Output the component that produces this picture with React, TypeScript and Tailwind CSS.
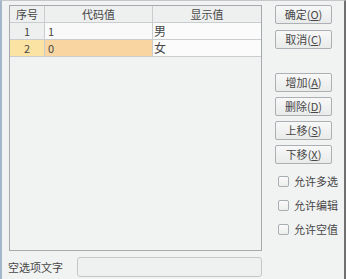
import React from "react";

const font = { fontFamily: '"Noto Sans CJK SC", "Noto Sans", sans-serif' };

function Btn({ label, k }: { label: string; k: string }) {
  return (
    <button className="w-[57px] h-[19px] rounded-[2px] border border-[#acb0b4] bg-gradient-to-b from-[#f8f8f8] to-[#e9eaea] text-[11px] leading-none text-[#474747] flex items-center justify-center">
      {label}(<span className="underline underline-offset-1">{k}</span>)
    </button>
  );
}

function Check({ label }: { label: string }) {
  return (
    <div className="flex items-center gap-[5px] h-[12px]">
      <span className="w-[11px] h-[11px] rounded-[2px] border border-[#a9aeb3] bg-gradient-to-b from-[#fbfbfb] to-[#eceded]" />
      <span className="text-[11px] leading-none text-[#474747]">{label}</span>
    </div>
  );
}

export default function App() {
  const rows = [
    { no: "1", code: "1", text: "男", active: false },
    { no: "2", code: "0", text: "女", active: true },
  ];

  return (
    <div
      style={font}
      className="w-[346px] h-[279px] bg-[#f1f2f2] border-l-2 border-l-[#a3b6ca] border-r-2 border-r-[#707070] border-t border-t-[#c4c8cb] flex text-[#474747] overflow-hidden"
    >
      {/* left */}
      <div className="pl-[7px] pt-[4px] w-[262px] flex flex-col">
        <div className="w-[253px] h-[246px] border border-[#a6aaae] bg-[#f1f2f2] flex flex-col">
          <div className="flex h-[17px] bg-[#eef0f0] border-b border-[#c9cdd0] text-[11px] leading-none">
            <div className="w-[35px] border-r border-[#c9cdd0] flex items-center justify-center">序号</div>
            <div className="w-[108px] border-r border-[#c9cdd0] flex items-center justify-center">代码值</div>
            <div className="flex-1 flex items-center justify-center">显示值</div>
          </div>
          {rows.map((r) => (
            <div key={r.no} className="flex h-[17px] border-b border-[#c9cdd0] text-[11px] leading-none">
              <div
                className={
                  "w-[35px] border-r border-[#c9cdd0] flex items-center justify-center " +
                  (r.active ? "bg-[#fbe3a3]" : "bg-[#eef0f0]")
                }
              >
                {r.no}
              </div>
              <div
                className={
                  "w-[108px] border-r border-[#c9cdd0] flex items-center pl-[3px] " +
                  (r.active ? "bg-[#f8d5a1]" : "bg-[#f9f9f9]")
                }
              >
                {r.code}
              </div>
              <div className="flex-1 flex items-center pl-[1px] bg-[#fbfbfb] text-[12px]">{r.text}</div>
            </div>
          ))}
        </div>
        <div className="flex items-center mt-[6px] -ml-[1px]">
          <span className="w-[69px] text-[11px] leading-none">空选项文字</span>
          <div className="w-[185px] h-[20px] rounded-[3px] border border-[#c3c7ca] bg-[#eff1f1]" />
        </div>
      </div>

      {/* right */}
      <div className="pl-[11px] pt-[4px] flex flex-col">
        <div className="flex flex-col gap-[6px]">
          <Btn label="确定" k="O" />
          <Btn label="取消" k="C" />
        </div>
        <div className="flex flex-col gap-[5px] mt-[24px]">
          <Btn label="增加" k="A" />
          <Btn label="删除" k="D" />
          <Btn label="上移" k="S" />
          <Btn label="下移" k="X" />
        </div>
        <div className="flex flex-col gap-[12px] mt-[11px] pl-[3px]">
          <Check label="允许多选" />
          <Check label="允许编辑" />
          <Check label="允许空值" />
        </div>
      </div>
    </div>
  );
}
